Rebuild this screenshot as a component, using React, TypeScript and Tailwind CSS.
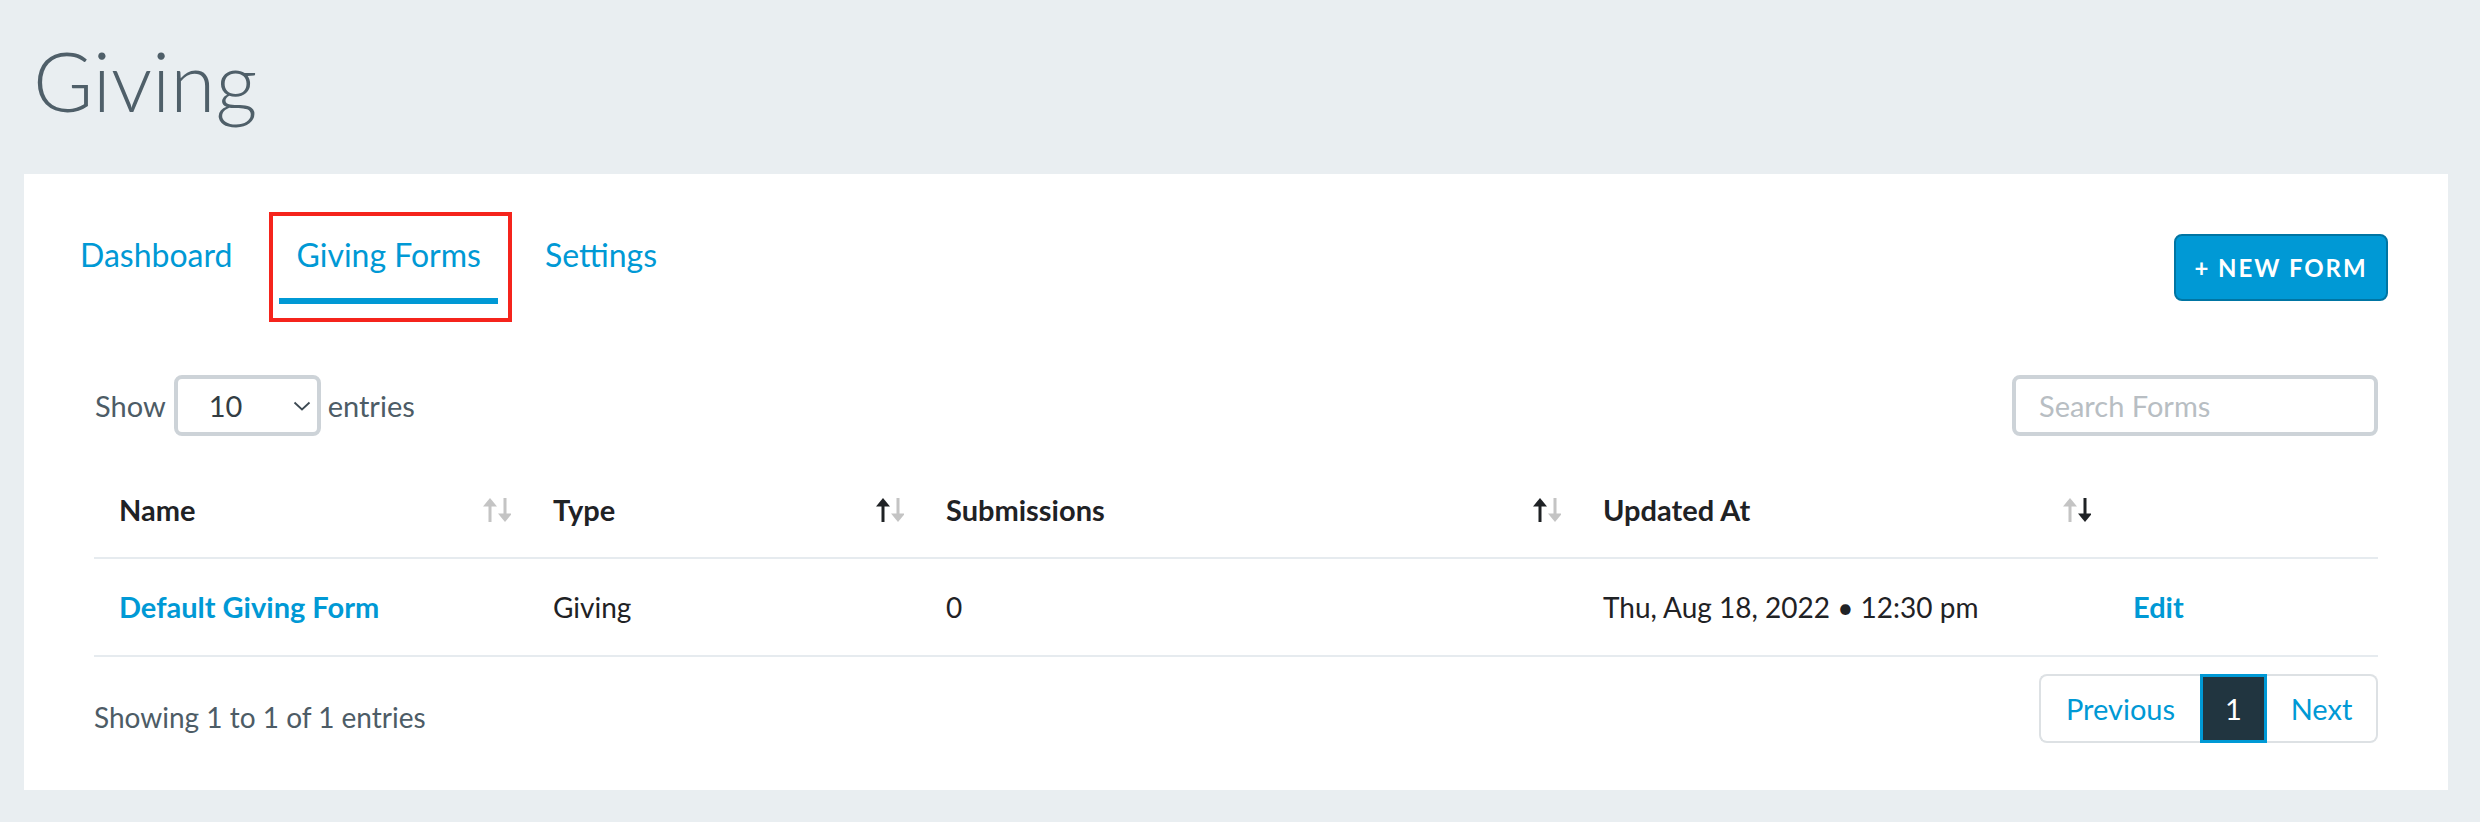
import React from "react";

const cols = "grid grid-cols-[434px_393px_657px_530px_1fr]";

function SortIcon({ up, down }: { up: string; down: string }) {
  return (
    <svg width="28" height="24" viewBox="0 0 28 24" className="shrink-0">
      <rect x="5.5" y="6" width="3" height="18" fill={up} />
      <polygon points="0,8.5 7,0 14,8.5" fill={up} />
      <rect x="20.5" y="0" width="3" height="17" fill={down} />
      <polygon points="15,15.5 22,24 29,15.5" fill={down} />
    </svg>
  );
}

const LIGHT = "#c4c4c4";
const DARK = "#1f2225";

function HeadCell({ label, up, down }: { label: string; up?: string; down?: string }) {
  return (
    <div className="h-[96px] border-b-2 border-[#e6ebef] pl-[25px] pr-[17px] flex items-center justify-between">
      <span className="text-[29px] font-bold text-[#1f2225]">{label}</span>
      {up && down ? <SortIcon up={up} down={down} /> : null}
    </div>
  );
}

function Cell({ children }: { children: React.ReactNode }) {
  return (
    <div className="h-[98px] border-b-2 border-[#e6ebef] pl-[25px] flex items-center text-[28px] text-[#1f2225]">
      {children}
    </div>
  );
}

function Tab({ label, active }: { label: string; active?: boolean }) {
  return (
    <div
      className={`px-[17px] pb-[24px] border-b-[6px] text-[32px] leading-[38px] text-[#0099d5] ${
        active ? "border-[#0099d5]" : "border-transparent"
      }`}
    >
      {label}
    </div>
  );
}

export default function App() {
  return (
    <div className="min-h-screen bg-[#e9eef1] font-['Lato','Noto_Sans',sans-serif] pt-[39px] pb-[36px]">
      <h1 className="ml-[33px] text-[82px] font-light leading-none text-[#4f5f69]">Giving</h1>

      <div className="mt-[53px] ml-[24px] mr-[32px] bg-white pt-[60px] pb-[47px]">
        <div className="flex items-start justify-between pl-[39px] pr-[60px]">
          <nav className="flex gap-[30px] mt-[2px]">
            <Tab label="Dashboard" />
            <div className="relative">
              <Tab label="Giving Forms" active />
              <div className="absolute -left-[10px] -right-[14px] -top-[24px] -bottom-[18px] border-[4px] border-[#f5241c] pointer-events-none" />
            </div>
            <Tab label="Settings" />
          </nav>
          <button className="h-[67px] w-[214px] rounded-[8px] border-2 border-[#0075a3] bg-[#0099d5] text-white text-[24px] font-bold tracking-[0.08em]">
            + NEW FORM
          </button>
        </div>

        <div className="mt-[71px] px-[70px] flex items-center justify-between">
          <div className="flex items-center text-[29px] text-[#4d5c66]">
            <span className="ml-[1px]">Show</span>
            <div className="ml-[8px] w-[147px] h-[61px] border-[4px] border-[#cdd3d8] rounded-[8px] flex items-center justify-between pl-[31px] pr-[6px]">
              <span className="text-[#333d44]">10</span>
              <svg width="18" height="10" viewBox="0 0 18 10">
                <polyline points="1.5,1.5 9,8.5 16.5,1.5" fill="none" stroke="#3d4a53" strokeWidth="1.8" />
              </svg>
            </div>
            <span className="ml-[7px]">entries</span>
          </div>
          <div className="w-[366px] h-[61px] border-[4px] border-[#cdd3d8] rounded-[8px] flex items-center pl-[23px] text-[29px] text-[#b8bec3]">
            Search Forms
          </div>
        </div>

        <div className="mt-[27px] mx-[70px]">
          <div className={cols}>
            <HeadCell label="Name" up={LIGHT} down={LIGHT} />
            <HeadCell label="Type" up={DARK} down={LIGHT} />
            <HeadCell label="Submissions" up={DARK} down={LIGHT} />
            <HeadCell label="Updated At" up={LIGHT} down={DARK} />
            <HeadCell label="" />
          </div>
          <div className={cols}>
            <Cell>
              <span className="font-bold text-[29px] text-[#0099d5]">Default Giving Form</span>
            </Cell>
            <Cell>Giving</Cell>
            <Cell>0</Cell>
            <Cell>Thu, Aug 18, 2022 • 12:30 pm</Cell>
            <Cell>
              <span className="font-bold text-[29px] text-[#0099d5]">Edit</span>
            </Cell>
          </div>

          <div className="mt-[17px] flex items-start justify-between">
            <div className="mt-[25px] text-[28px] leading-[36px] text-[#4d5c66]">Showing 1 to 1 of 1 entries</div>
            <div className="flex h-[69px] text-[29px]">
              <div className="w-[161px] border-2 border-r-0 border-[#dde1e4] rounded-l-[8px] flex items-center justify-center text-[#0099d5]">
                Previous
              </div>
              <div className="w-[67px] border-[3px] border-[#0099d5] bg-[#213540] flex items-center justify-center text-white">
                1
              </div>
              <div className="w-[111px] border-2 border-l-0 border-[#dde1e4] rounded-r-[8px] flex items-center justify-center text-[#0099d5]">
                Next
              </div>
            </div>
          </div>
        </div>
      </div>
    </div>
  );
}
